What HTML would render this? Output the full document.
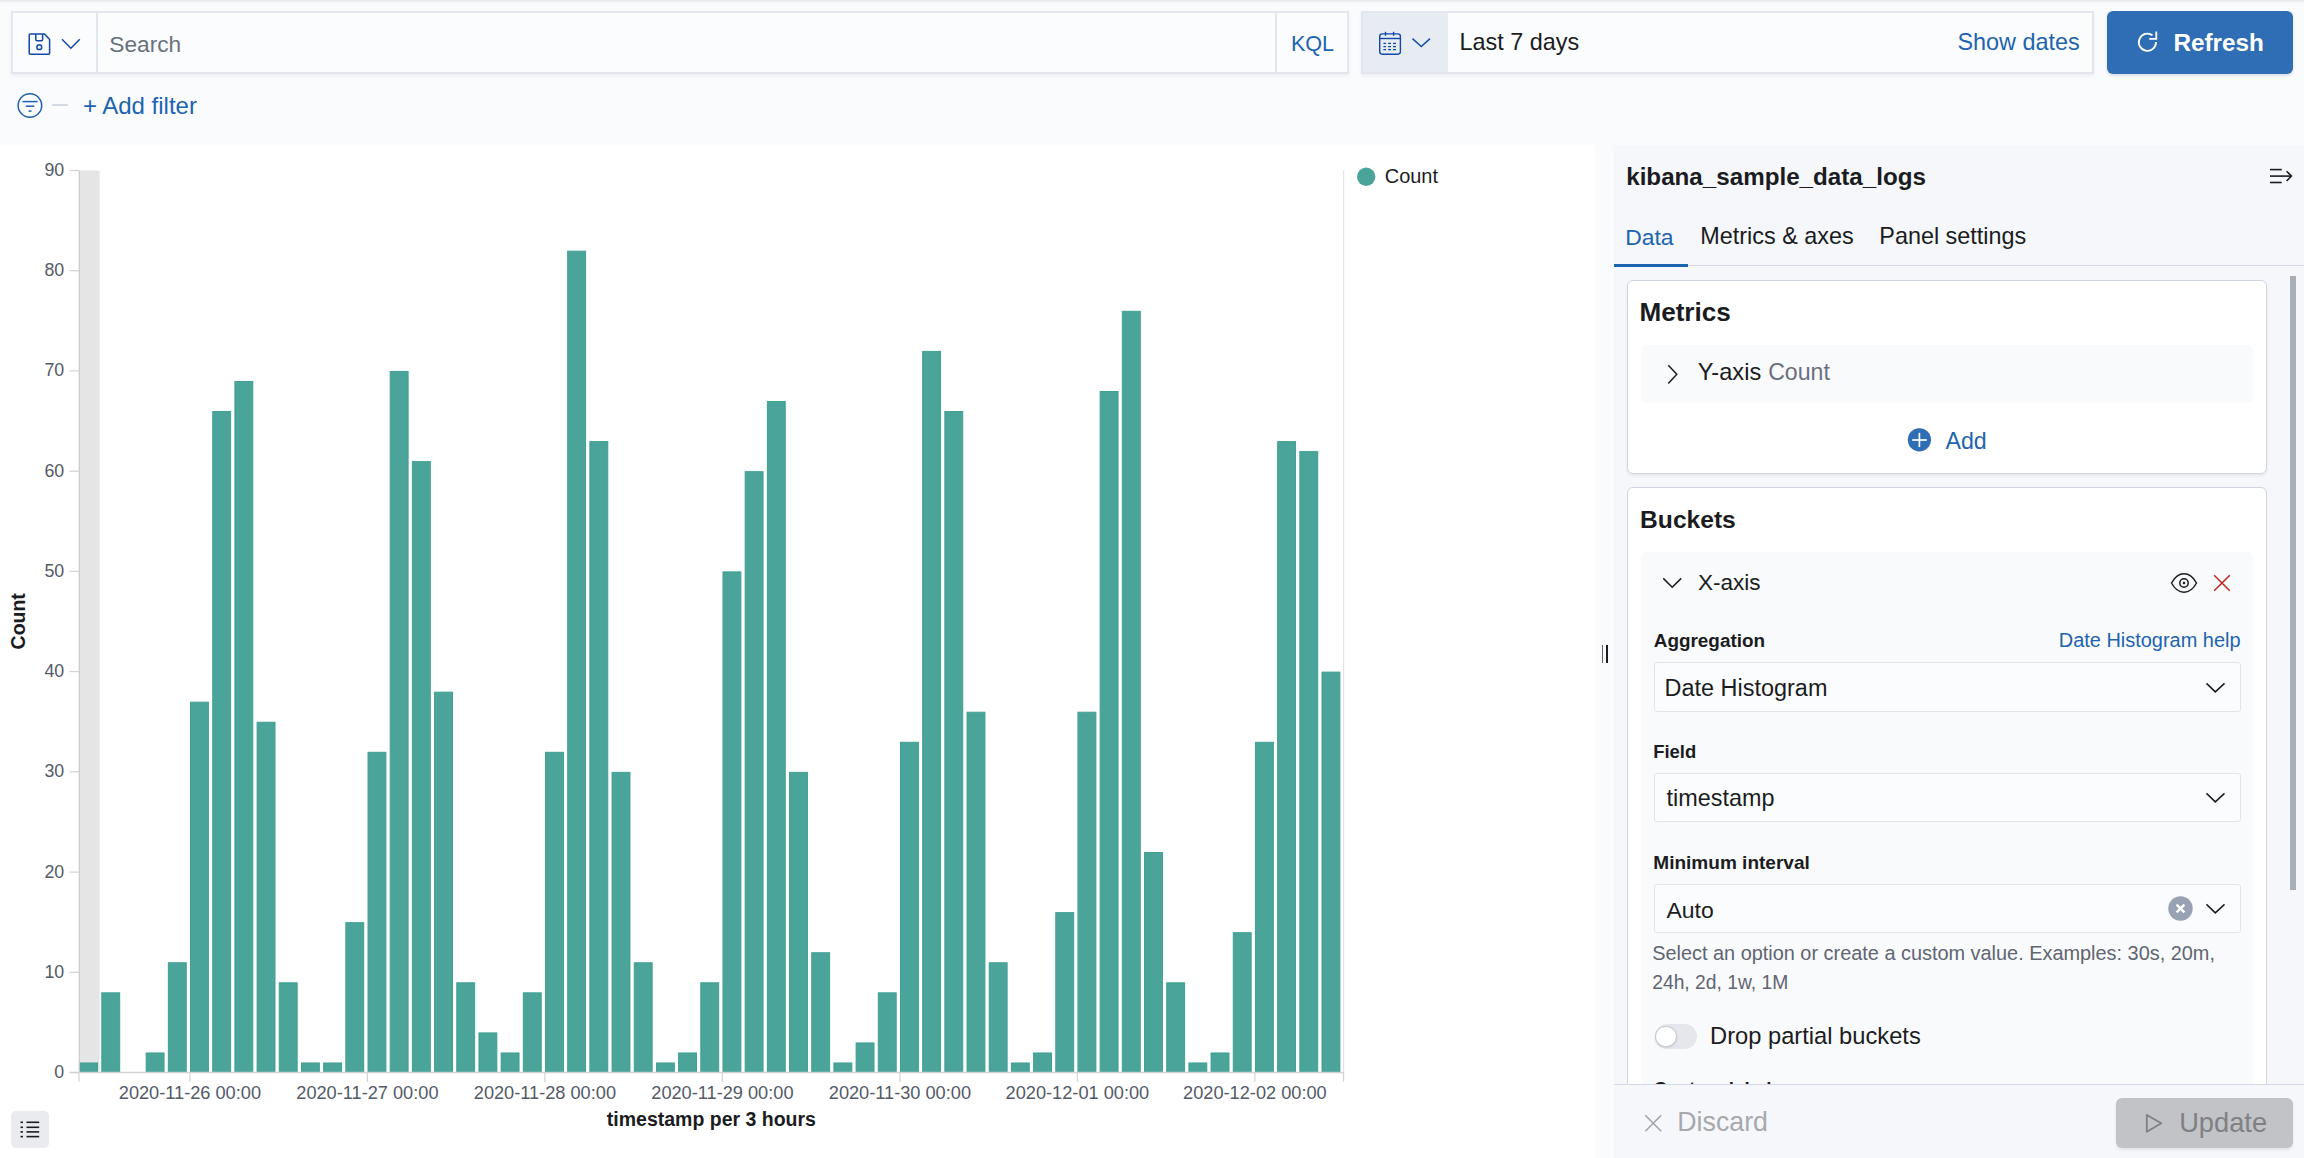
<!DOCTYPE html>
<html><head><meta charset="utf-8"><title>Kibana visualize</title>
<style>
*{box-sizing:border-box;margin:0;padding:0}
html,body{width:2304px;height:1158px;overflow:hidden}
body{position:relative;background:#fafbfd;font-family:"Liberation Sans",sans-serif;color:#343741}
.t{position:absolute;line-height:1;white-space:nowrap}
.abs{position:absolute}
svg{position:absolute;overflow:visible}
</style></head><body>
<div class="abs" style="left:0;top:0;width:2304px;height:4px;background:linear-gradient(#e7e8ec,rgba(250,251,253,0))"></div>
<div class="abs" style="left:11px;top:11px;width:1338px;height:63px;background:#fbfcfd;border:2px solid #e4e6ef;box-shadow:0 2px 3px rgba(60,70,100,0.07)"></div>
<div class="abs" style="left:96px;top:13px;width:1.5px;height:59px;background:#e3e6ee"></div>
<div class="abs" style="left:1275px;top:13px;width:1.5px;height:59px;background:#e3e6ee"></div>
<svg style="left:28px;top:33px" width="23" height="23" viewBox="0 0 23 23"><path d="M2.2 1.1 H16.6 L21.6 6.4 V20.3 Q21.6 21.3 20.6 21.3 H2.2 Q1.2 21.3 1.2 20.3 V2.1 Q1.2 1.1 2.2 1.1 Z" fill="none" stroke="#1448a8" stroke-width="1.5" stroke-linejoin="round"/><path d="M7.8 1.1 V6.6 Q7.8 7.7 8.9 7.7 H13.5 Q14.6 7.7 14.6 6.6 V1.1" fill="none" stroke="#1448a8" stroke-width="1.5"/><circle cx="11.3" cy="14.2" r="2.4" fill="none" stroke="#1448a8" stroke-width="1.5"/></svg>
<svg style="left:61px;top:38px" width="21" height="12" viewBox="0 0 21 12"><path d="M1 1.2 L9.9 10.2 L18.8 1.2" fill="none" stroke="#1448a8" stroke-width="1.5"/></svg>
<div class="t" style="left:109.3px;top:32.8px;font-size:22.7px;color:#69707d;font-weight:400;">Search</div>
<div class="t" style="left:1290.9px;top:32.6px;font-size:21.6px;color:#1d64b0;font-weight:400;">KQL</div>
<div class="abs" style="left:1361px;top:11px;width:733px;height:63px;background:#fbfcfd;border:2px solid #e4e6ef;box-shadow:0 2px 3px rgba(60,70,100,0.07)"></div>
<div class="abs" style="left:1363px;top:13px;width:85px;height:59px;background:#e7ecf3"></div>
<svg style="left:1378px;top:31px" width="24" height="25" viewBox="0 0 24 25"><rect x="1.7" y="2.9" width="20.7" height="20.3" rx="2.6" fill="none" stroke="#1448a8" stroke-width="1.4"/><line x1="1.7" y1="7.5" x2="22.4" y2="7.5" stroke="#1448a8" stroke-width="1.4"/><line x1="7.5" y1="0.8" x2="7.5" y2="4.8" stroke="#1448a8" stroke-width="1.4"/><line x1="15.6" y1="0.8" x2="15.6" y2="4.8" stroke="#1448a8" stroke-width="1.4"/><g stroke="#1448a8" stroke-width="1.3"><line x1="5.4" y1="12.4" x2="8.1" y2="12.4"/><line x1="10.1" y1="12.4" x2="13" y2="12.4"/><line x1="15" y1="12.4" x2="18" y2="12.4"/><line x1="5.4" y1="15.6" x2="8.1" y2="15.6"/><line x1="10.1" y1="15.6" x2="13" y2="15.6"/><line x1="15" y1="15.6" x2="18" y2="15.6"/><line x1="5.4" y1="18.6" x2="8.1" y2="18.6"/><line x1="10.1" y1="18.6" x2="13" y2="18.6"/><line x1="15" y1="18.6" x2="18" y2="18.6"/></g></svg>
<svg style="left:1411px;top:37px" width="21" height="12" viewBox="0 0 21 12"><path d="M1.5 1.6 L10.3 9.6 L19 1.6" fill="none" stroke="#1450a8" stroke-width="1.5"/></svg>
<div class="t" style="left:1459.6px;top:31.1px;font-size:23.4px;color:#1a1c21;font-weight:400;">Last 7 days</div>
<div class="t" style="left:1957.5px;top:31.3px;font-size:23.4px;color:#1d64b0;font-weight:400;">Show dates</div>
<div class="abs" style="left:2107px;top:11px;width:186px;height:63px;background:#2f6db4;border-radius:6px;box-shadow:0 2px 3px rgba(40,60,100,0.15)"></div>
<svg style="left:2136px;top:30px" width="24" height="24" viewBox="0 0 24 24"><path d="M20.04 12.1 A8.6 8.6 0 1 1 16.5 5.3" fill="none" stroke="#fff" stroke-width="1.8"/><path d="M20.3 1.5 V8.8 H13.3" fill="none" stroke="#fff" stroke-width="1.8"/></svg>
<div class="t" style="left:2173.4px;top:31.0px;font-size:24.25px;color:#ffffff;font-weight:700;">Refresh</div>
<svg style="left:16px;top:92px" width="28" height="28" viewBox="0 0 28 28"><circle cx="13.9" cy="13.5" r="11.8" fill="none" stroke="#1d5fb0" stroke-width="1.5"/><line x1="6.5" y1="9.6" x2="21.6" y2="9.6" stroke="#1d5fb0" stroke-width="1.5"/><line x1="9.8" y1="14.2" x2="18.3" y2="14.2" stroke="#1d5fb0" stroke-width="1.5"/><line x1="12.6" y1="19.1" x2="15.5" y2="19.1" stroke="#1d5fb0" stroke-width="1.5"/></svg>
<div class="abs" style="left:52px;top:104px;width:16px;height:2px;background:#d3dae6"></div>
<div class="t" style="left:82.9px;top:94.3px;font-size:24.0px;color:#1d64b0;font-weight:400;">+ Add filter</div>
<div class="abs" style="left:0;top:145px;width:1595px;height:1013px;background:#ffffff"></div>
<svg style="left:0;top:0" width="1595" height="1158" viewBox="0 0 1595 1158"><rect x="80" y="170.5" width="19.7" height="902.0" fill="#e5e5e5"/><rect x="79.60" y="1062.98" width="17.9" height="9.02" fill="#4ba49a" stroke="#40a094" stroke-width="1"/><rect x="101.79" y="992.82" width="17.9" height="79.18" fill="#4ba49a" stroke="#40a094" stroke-width="1"/><rect x="146.16" y="1052.96" width="17.9" height="19.04" fill="#4ba49a" stroke="#40a094" stroke-width="1"/><rect x="168.34" y="962.76" width="17.9" height="109.24" fill="#4ba49a" stroke="#40a094" stroke-width="1"/><rect x="190.53" y="702.18" width="17.9" height="369.82" fill="#4ba49a" stroke="#40a094" stroke-width="1"/><rect x="212.72" y="411.53" width="17.9" height="660.47" fill="#4ba49a" stroke="#40a094" stroke-width="1"/><rect x="234.90" y="381.47" width="17.9" height="690.53" fill="#4ba49a" stroke="#40a094" stroke-width="1"/><rect x="257.09" y="722.22" width="17.9" height="349.78" fill="#4ba49a" stroke="#40a094" stroke-width="1"/><rect x="279.27" y="982.80" width="17.9" height="89.20" fill="#4ba49a" stroke="#40a094" stroke-width="1"/><rect x="301.46" y="1062.98" width="17.9" height="9.02" fill="#4ba49a" stroke="#40a094" stroke-width="1"/><rect x="323.65" y="1062.98" width="17.9" height="9.02" fill="#4ba49a" stroke="#40a094" stroke-width="1"/><rect x="345.83" y="922.67" width="17.9" height="149.33" fill="#4ba49a" stroke="#40a094" stroke-width="1"/><rect x="368.02" y="752.29" width="17.9" height="319.71" fill="#4ba49a" stroke="#40a094" stroke-width="1"/><rect x="390.20" y="371.44" width="17.9" height="700.56" fill="#4ba49a" stroke="#40a094" stroke-width="1"/><rect x="412.39" y="461.64" width="17.9" height="610.36" fill="#4ba49a" stroke="#40a094" stroke-width="1"/><rect x="434.58" y="692.16" width="17.9" height="379.84" fill="#4ba49a" stroke="#40a094" stroke-width="1"/><rect x="456.76" y="982.80" width="17.9" height="89.20" fill="#4ba49a" stroke="#40a094" stroke-width="1"/><rect x="478.95" y="1032.91" width="17.9" height="39.09" fill="#4ba49a" stroke="#40a094" stroke-width="1"/><rect x="501.13" y="1052.96" width="17.9" height="19.04" fill="#4ba49a" stroke="#40a094" stroke-width="1"/><rect x="523.32" y="992.82" width="17.9" height="79.18" fill="#4ba49a" stroke="#40a094" stroke-width="1"/><rect x="545.51" y="752.29" width="17.9" height="319.71" fill="#4ba49a" stroke="#40a094" stroke-width="1"/><rect x="567.69" y="251.18" width="17.9" height="820.82" fill="#4ba49a" stroke="#40a094" stroke-width="1"/><rect x="589.88" y="441.60" width="17.9" height="630.40" fill="#4ba49a" stroke="#40a094" stroke-width="1"/><rect x="612.06" y="772.33" width="17.9" height="299.67" fill="#4ba49a" stroke="#40a094" stroke-width="1"/><rect x="634.25" y="962.76" width="17.9" height="109.24" fill="#4ba49a" stroke="#40a094" stroke-width="1"/><rect x="656.44" y="1062.98" width="17.9" height="9.02" fill="#4ba49a" stroke="#40a094" stroke-width="1"/><rect x="678.62" y="1052.96" width="17.9" height="19.04" fill="#4ba49a" stroke="#40a094" stroke-width="1"/><rect x="700.81" y="982.80" width="17.9" height="89.20" fill="#4ba49a" stroke="#40a094" stroke-width="1"/><rect x="722.99" y="571.89" width="17.9" height="500.11" fill="#4ba49a" stroke="#40a094" stroke-width="1"/><rect x="745.18" y="471.67" width="17.9" height="600.33" fill="#4ba49a" stroke="#40a094" stroke-width="1"/><rect x="767.36" y="401.51" width="17.9" height="670.49" fill="#4ba49a" stroke="#40a094" stroke-width="1"/><rect x="789.55" y="772.33" width="17.9" height="299.67" fill="#4ba49a" stroke="#40a094" stroke-width="1"/><rect x="811.74" y="952.73" width="17.9" height="119.27" fill="#4ba49a" stroke="#40a094" stroke-width="1"/><rect x="833.92" y="1062.98" width="17.9" height="9.02" fill="#4ba49a" stroke="#40a094" stroke-width="1"/><rect x="856.11" y="1042.93" width="17.9" height="29.07" fill="#4ba49a" stroke="#40a094" stroke-width="1"/><rect x="878.29" y="992.82" width="17.9" height="79.18" fill="#4ba49a" stroke="#40a094" stroke-width="1"/><rect x="900.48" y="742.27" width="17.9" height="329.73" fill="#4ba49a" stroke="#40a094" stroke-width="1"/><rect x="922.67" y="351.40" width="17.9" height="720.60" fill="#4ba49a" stroke="#40a094" stroke-width="1"/><rect x="944.85" y="411.53" width="17.9" height="660.47" fill="#4ba49a" stroke="#40a094" stroke-width="1"/><rect x="967.04" y="712.20" width="17.9" height="359.80" fill="#4ba49a" stroke="#40a094" stroke-width="1"/><rect x="989.22" y="962.76" width="17.9" height="109.24" fill="#4ba49a" stroke="#40a094" stroke-width="1"/><rect x="1011.41" y="1062.98" width="17.9" height="9.02" fill="#4ba49a" stroke="#40a094" stroke-width="1"/><rect x="1033.60" y="1052.96" width="17.9" height="19.04" fill="#4ba49a" stroke="#40a094" stroke-width="1"/><rect x="1055.78" y="912.64" width="17.9" height="159.36" fill="#4ba49a" stroke="#40a094" stroke-width="1"/><rect x="1077.97" y="712.20" width="17.9" height="359.80" fill="#4ba49a" stroke="#40a094" stroke-width="1"/><rect x="1100.15" y="391.49" width="17.9" height="680.51" fill="#4ba49a" stroke="#40a094" stroke-width="1"/><rect x="1122.34" y="311.31" width="17.9" height="760.69" fill="#4ba49a" stroke="#40a094" stroke-width="1"/><rect x="1144.53" y="852.51" width="17.9" height="219.49" fill="#4ba49a" stroke="#40a094" stroke-width="1"/><rect x="1166.71" y="982.80" width="17.9" height="89.20" fill="#4ba49a" stroke="#40a094" stroke-width="1"/><rect x="1188.90" y="1062.98" width="17.9" height="9.02" fill="#4ba49a" stroke="#40a094" stroke-width="1"/><rect x="1211.08" y="1052.96" width="17.9" height="19.04" fill="#4ba49a" stroke="#40a094" stroke-width="1"/><rect x="1233.27" y="932.69" width="17.9" height="139.31" fill="#4ba49a" stroke="#40a094" stroke-width="1"/><rect x="1255.46" y="742.27" width="17.9" height="329.73" fill="#4ba49a" stroke="#40a094" stroke-width="1"/><rect x="1277.64" y="441.60" width="17.9" height="630.40" fill="#4ba49a" stroke="#40a094" stroke-width="1"/><rect x="1299.83" y="451.62" width="17.9" height="620.38" fill="#4ba49a" stroke="#40a094" stroke-width="1"/><rect x="1322.01" y="672.11" width="17.9" height="399.89" fill="#4ba49a" stroke="#40a094" stroke-width="1"/><line x1="79.3" y1="170.5" x2="79.3" y2="1072.5" stroke="#c9c9c9" stroke-width="1.2"/><line x1="1343.6" y1="170.5" x2="1343.6" y2="1072.5" stroke="#e3e3e3" stroke-width="1.2"/><line x1="69.5" y1="1072.5" x2="1344" y2="1072.5" stroke="#d3d3d3" stroke-width="1.5"/><line x1="69.5" y1="1072.5" x2="79" y2="1072.5" stroke="#d3d3d3" stroke-width="1.2"/><text x="64.2" y="1077.9" text-anchor="end" font-size="17.8" fill="#535a67" font-family="Liberation Sans">0</text><line x1="69.5" y1="972.3" x2="79" y2="972.3" stroke="#d3d3d3" stroke-width="1.2"/><text x="64.2" y="977.7" text-anchor="end" font-size="17.8" fill="#535a67" font-family="Liberation Sans">10</text><line x1="69.5" y1="872.1" x2="79" y2="872.1" stroke="#d3d3d3" stroke-width="1.2"/><text x="64.2" y="877.5" text-anchor="end" font-size="17.8" fill="#535a67" font-family="Liberation Sans">20</text><line x1="69.5" y1="771.8" x2="79" y2="771.8" stroke="#d3d3d3" stroke-width="1.2"/><text x="64.2" y="777.2" text-anchor="end" font-size="17.8" fill="#535a67" font-family="Liberation Sans">30</text><line x1="69.5" y1="671.6" x2="79" y2="671.6" stroke="#d3d3d3" stroke-width="1.2"/><text x="64.2" y="677.0" text-anchor="end" font-size="17.8" fill="#535a67" font-family="Liberation Sans">40</text><line x1="69.5" y1="571.4" x2="79" y2="571.4" stroke="#d3d3d3" stroke-width="1.2"/><text x="64.2" y="576.8" text-anchor="end" font-size="17.8" fill="#535a67" font-family="Liberation Sans">50</text><line x1="69.5" y1="471.2" x2="79" y2="471.2" stroke="#d3d3d3" stroke-width="1.2"/><text x="64.2" y="476.6" text-anchor="end" font-size="17.8" fill="#535a67" font-family="Liberation Sans">60</text><line x1="69.5" y1="370.9" x2="79" y2="370.9" stroke="#d3d3d3" stroke-width="1.2"/><text x="64.2" y="376.3" text-anchor="end" font-size="17.8" fill="#535a67" font-family="Liberation Sans">70</text><line x1="69.5" y1="270.7" x2="79" y2="270.7" stroke="#d3d3d3" stroke-width="1.2"/><text x="64.2" y="276.1" text-anchor="end" font-size="17.8" fill="#535a67" font-family="Liberation Sans">80</text><line x1="69.5" y1="170.5" x2="79" y2="170.5" stroke="#d3d3d3" stroke-width="1.2"/><text x="64.2" y="175.9" text-anchor="end" font-size="17.8" fill="#535a67" font-family="Liberation Sans">90</text><line x1="79.0" y1="1072.5" x2="79.0" y2="1081.7" stroke="#d3d3d3" stroke-width="1.2"/><line x1="1343.6" y1="1072.5" x2="1343.6" y2="1081.7" stroke="#d3d3d3" stroke-width="1.2"/><line x1="189.9" y1="1072.5" x2="189.9" y2="1081.7" stroke="#d3d3d3" stroke-width="1.2"/><text x="189.9" y="1098.9" text-anchor="middle" font-size="18.2" fill="#535a67" font-family="Liberation Sans">2020-11-26 00:00</text><line x1="367.4" y1="1072.5" x2="367.4" y2="1081.7" stroke="#d3d3d3" stroke-width="1.2"/><text x="367.4" y="1098.9" text-anchor="middle" font-size="18.2" fill="#535a67" font-family="Liberation Sans">2020-11-27 00:00</text><line x1="544.9" y1="1072.5" x2="544.9" y2="1081.7" stroke="#d3d3d3" stroke-width="1.2"/><text x="544.9" y="1098.9" text-anchor="middle" font-size="18.2" fill="#535a67" font-family="Liberation Sans">2020-11-28 00:00</text><line x1="722.4" y1="1072.5" x2="722.4" y2="1081.7" stroke="#d3d3d3" stroke-width="1.2"/><text x="722.4" y="1098.9" text-anchor="middle" font-size="18.2" fill="#535a67" font-family="Liberation Sans">2020-11-29 00:00</text><line x1="899.9" y1="1072.5" x2="899.9" y2="1081.7" stroke="#d3d3d3" stroke-width="1.2"/><text x="899.9" y="1098.9" text-anchor="middle" font-size="18.2" fill="#535a67" font-family="Liberation Sans">2020-11-30 00:00</text><line x1="1077.4" y1="1072.5" x2="1077.4" y2="1081.7" stroke="#d3d3d3" stroke-width="1.2"/><text x="1077.4" y="1098.9" text-anchor="middle" font-size="18.2" fill="#535a67" font-family="Liberation Sans">2020-12-01 00:00</text><line x1="1254.9" y1="1072.5" x2="1254.9" y2="1081.7" stroke="#d3d3d3" stroke-width="1.2"/><text x="1254.9" y="1098.9" text-anchor="middle" font-size="18.2" fill="#535a67" font-family="Liberation Sans">2020-12-02 00:00</text><text x="711.4" y="1126" text-anchor="middle" font-size="19.5" font-weight="700" fill="#1a1c21" font-family="Liberation Sans">timestamp per 3 hours</text><text transform="translate(24.8 621.3) rotate(-90)" text-anchor="middle" font-size="19.5" font-weight="700" fill="#1a1c21" font-family="Liberation Sans">Count</text><circle cx="1366.2" cy="176.7" r="9.2" fill="#4ba49a"/></svg>
<div class="t" style="left:1384.8px;top:166.7px;font-size:19.95px;color:#1a1c21;font-weight:400;">Count</div>
<div class="abs" style="left:11px;top:1111px;width:37.5px;height:37px;background:#e9ebee;border-radius:5px"></div>
<svg style="left:20px;top:1120px" width="20" height="19" viewBox="0 0 20 19"><g stroke="#1a1c21" stroke-width="1.6"><line x1="0.5" y1="2.3" x2="3" y2="2.3"/><line x1="0.5" y1="7.3" x2="3" y2="7.3"/><line x1="0.5" y1="11.9" x2="3" y2="11.9"/><line x1="0.5" y1="16.6" x2="3" y2="16.6"/><line x1="6.5" y1="2.3" x2="19.2" y2="2.3"/><line x1="6.5" y1="7.3" x2="19.2" y2="7.3"/><line x1="6.5" y1="11.9" x2="19.2" y2="11.9"/><line x1="6.5" y1="16.6" x2="19.2" y2="16.6"/></g></svg>
<div class="abs" style="left:1614px;top:145px;width:690px;height:1013px;background:#f5f7fa"></div>
<div class="abs" style="left:1601.5px;top:645px;width:1.5px;height:18px;background:#5a5f6a"></div>
<div class="abs" style="left:1606px;top:645px;width:1.5px;height:18px;background:#1a1c21"></div>
<div class="t" style="left:1626.2px;top:165.1px;font-size:24.2px;color:#1a1c21;font-weight:700;">kibana_sample_data_logs</div>
<svg style="left:2268px;top:167px" width="26" height="18" viewBox="0 0 26 18"><g stroke="#1a1c21" stroke-width="1.6" fill="none"><line x1="2" y1="2.6" x2="13.7" y2="2.6"/><line x1="2" y1="9.1" x2="23" y2="9.1"/><line x1="2" y1="15.5" x2="13.7" y2="15.5"/><path d="M18.6 4.2 L23.4 9.1 L18.6 14"/></g></svg>
<div class="t" style="left:1625.2px;top:225.7px;font-size:22.9px;color:#1d64b0;font-weight:400;">Data</div>
<div class="t" style="left:1700.3px;top:225.3px;font-size:23.4px;color:#1a1c21;font-weight:400;">Metrics &amp; axes</div>
<div class="t" style="left:1879.3px;top:225.3px;font-size:23.4px;color:#1a1c21;font-weight:400;">Panel settings</div>
<div class="abs" style="left:1614px;top:265px;width:690px;height:1.3px;background:#d3dae6"></div>
<div class="abs" style="left:1614px;top:263.5px;width:74px;height:3px;background:#1d64b0"></div>
<div class="abs" style="left:1627px;top:280px;width:640px;height:194px;background:#fff;border:1px solid #cfd6e2;border-radius:6px;box-shadow:0 2px 3px rgba(60,70,100,0.08)"></div>
<div class="t" style="left:1639.4px;top:299.3px;font-size:26.1px;color:#1a1c21;font-weight:700;">Metrics</div>
<div class="abs" style="left:1641px;top:344.5px;width:612px;height:58px;background:#f9fafc;border-radius:6px"></div>
<svg style="left:1666px;top:364px" width="13" height="21" viewBox="0 0 13 21"><path d="M2.3 1.3 L10.8 10.3 L2.3 19.4" fill="none" stroke="#1a1c21" stroke-width="1.5"/></svg>
<div class="t" style="left:1697.8px;top:360.9px;font-size:23.6px;color:#1a1c21;font-weight:400;">Y-axis</div>
<div class="t" style="left:1768.2px;top:361.3px;font-size:23.1px;color:#69707d;font-weight:400;">Count</div>
<svg style="left:1907px;top:428px" width="25" height="25" viewBox="0 0 25 25"><circle cx="12.4" cy="11.8" r="11.6" fill="#2f6db4"/><line x1="5.2" y1="12" x2="19.8" y2="12" stroke="#fff" stroke-width="1.7"/><line x1="12.4" y1="4.8" x2="12.4" y2="19.1" stroke="#fff" stroke-width="1.7"/></svg>
<div class="t" style="left:1945.5px;top:429.6px;font-size:23.2px;color:#1d64b0;font-weight:400;">Add</div>
<div class="abs" style="left:1627px;top:487px;width:640px;height:700px;background:#fff;border:1px solid #cfd6e2;border-radius:6px"></div>
<div class="t" style="left:1640.1px;top:507.5px;font-size:24.6px;color:#1a1c21;font-weight:700;">Buckets</div>
<div class="abs" style="left:1641px;top:551.5px;width:612px;height:640px;background:#f9fafc;border-radius:6px"></div>
<svg style="left:1662px;top:577px" width="21" height="12" viewBox="0 0 21 12"><path d="M1.3 1.4 L10.2 10.2 L19.2 1.4" fill="none" stroke="#1a1c21" stroke-width="1.5"/></svg>
<div class="t" style="left:1697.9px;top:572.4px;font-size:22.55px;color:#1a1c21;font-weight:400;">X-axis</div>
<svg style="left:2170px;top:572px" width="28" height="22" viewBox="0 0 28 22"><path d="M1.5 11 C5 4.5 9.5 1.8 14 1.8 C18.5 1.8 23 4.5 26.5 11 C23 17.5 18.5 20.2 14 20.2 C9.5 20.2 5 17.5 1.5 11 Z" fill="none" stroke="#1a1c21" stroke-width="1.5"/><circle cx="14" cy="11" r="4.2" fill="none" stroke="#1a1c21" stroke-width="1.5"/><circle cx="14" cy="11" r="1.3" fill="#1a1c21"/></svg>
<svg style="left:2213px;top:574px" width="18" height="18" viewBox="0 0 18 18"><path d="M1.2 1.2 L16.8 16.8 M16.8 1.2 L1.2 16.8" stroke="#bd271e" stroke-width="1.5"/></svg>
<div class="t" style="left:1653.8px;top:631.5px;font-size:18.9px;color:#1a1c21;font-weight:700;">Aggregation</div>
<div class="t" style="left:2058.8px;top:631.2px;font-size:19.95px;color:#1d64b0;font-weight:400;">Date Histogram help</div>
<div class="abs" style="left:1654px;top:662px;width:587px;height:50px;background:#fbfcfd;border:1px solid #e0e4eb;border-radius:3px"></div>
<svg style="left:2205px;top:681.7px" width="21" height="12" viewBox="0 0 21 12"><path d="M1.5 1.4 L10.3 9.9 L19.5 1.4" fill="none" stroke="#1a1c21" stroke-width="1.5"/></svg>
<div class="t" style="left:1664.6px;top:677.3px;font-size:23.45px;color:#1a1c21;font-weight:400;">Date Histogram</div>
<div class="t" style="left:1653.2px;top:743.2px;font-size:18.45px;color:#1a1c21;font-weight:700;">Field</div>
<div class="abs" style="left:1654px;top:773px;width:587px;height:49px;background:#fbfcfd;border:1px solid #e0e4eb;border-radius:3px"></div>
<svg style="left:2205px;top:792.2px" width="21" height="12" viewBox="0 0 21 12"><path d="M1.5 1.4 L10.3 9.9 L19.5 1.4" fill="none" stroke="#1a1c21" stroke-width="1.5"/></svg>
<div class="t" style="left:1666.5px;top:787.3px;font-size:23.4px;color:#1a1c21;font-weight:400;">timestamp</div>
<div class="t" style="left:1653.3px;top:853.2px;font-size:19.05px;color:#1a1c21;font-weight:700;">Minimum interval</div>
<div class="abs" style="left:1654px;top:883.5px;width:587px;height:49.5px;background:#fbfcfd;border:1px solid #e0e4eb;border-radius:3px"></div>
<svg style="left:2205px;top:903.0px" width="21" height="12" viewBox="0 0 21 12"><path d="M1.5 1.4 L10.3 9.9 L19.5 1.4" fill="none" stroke="#1a1c21" stroke-width="1.5"/></svg>
<svg style="left:2168px;top:895.8px" width="25" height="25" viewBox="0 0 25 25"><circle cx="12.5" cy="12.5" r="12.2" fill="#98a2b3"/><path d="M8.6 8.6 L16.4 16.4 M16.4 8.6 L8.6 16.4" stroke="#fff" stroke-width="2.4"/></svg>
<div class="t" style="left:1666.5px;top:898.9px;font-size:22.95px;color:#1a1c21;font-weight:400;">Auto</div>
<div class="t" style="left:1652.2px;top:944.2px;font-size:19.9px;color:#5f6571;font-weight:400;">Select an option or create a custom value. Examples: 30s, 20m,</div>
<div class="t" style="left:1652.2px;top:972.6px;font-size:19.3px;color:#5f6571;font-weight:400;">24h, 2d, 1w, 1M</div>
<div class="abs" style="left:1654.5px;top:1024.3px;width:42.7px;height:24.5px;background:#e5e7ec;border-radius:12.5px"></div>
<div class="abs" style="left:1655px;top:1025.5px;width:21.5px;height:21.5px;background:#fff;border:1.2px solid #c3c6cb;border-radius:50%;box-shadow:0 1px 2px rgba(60,70,100,0.15)"></div>
<div class="t" style="left:1710.1px;top:1025.2px;font-size:23.7px;color:#1a1c21;font-weight:400;">Drop partial buckets</div>
<div class="t" style="left:1653.6px;top:1079.9px;font-size:18.8px;color:#1a1c21;font-weight:700;">Custom label</div>
<div class="abs" style="left:1614px;top:1084px;width:690px;height:74px;background:#f5f7fa;border-top:1px solid #d3dae6"></div>
<svg style="left:1644px;top:1114px" width="19" height="19" viewBox="0 0 19 19"><path d="M1.3 1.3 L17.2 17.2 M17.2 1.3 L1.3 17.2" stroke="#a2a5ab" stroke-width="1.6"/></svg>
<div class="t" style="left:1677.3px;top:1108.8px;font-size:26.75px;color:#a7a9ad;font-weight:400;">Discard</div>
<div class="abs" style="left:2116px;top:1098px;width:177px;height:50px;background:#c2c3c6;border-radius:6px;box-shadow:0 2px 3px rgba(0,0,0,0.08)"></div>
<svg style="left:2145px;top:1113px" width="18" height="21" viewBox="0 0 18 21"><path d="M1.8 2 L16.3 10.3 L1.8 18.8 Z" fill="none" stroke="#7f8084" stroke-width="1.8" stroke-linejoin="round"/></svg>
<div class="t" style="left:2179.2px;top:1108.7px;font-size:27.25px;color:#7f8084;font-weight:400;">Update</div>
<div class="abs" style="left:2290px;top:276px;width:6px;height:614px;background:#a9aeb6;border-radius:0"></div>
</body></html>
